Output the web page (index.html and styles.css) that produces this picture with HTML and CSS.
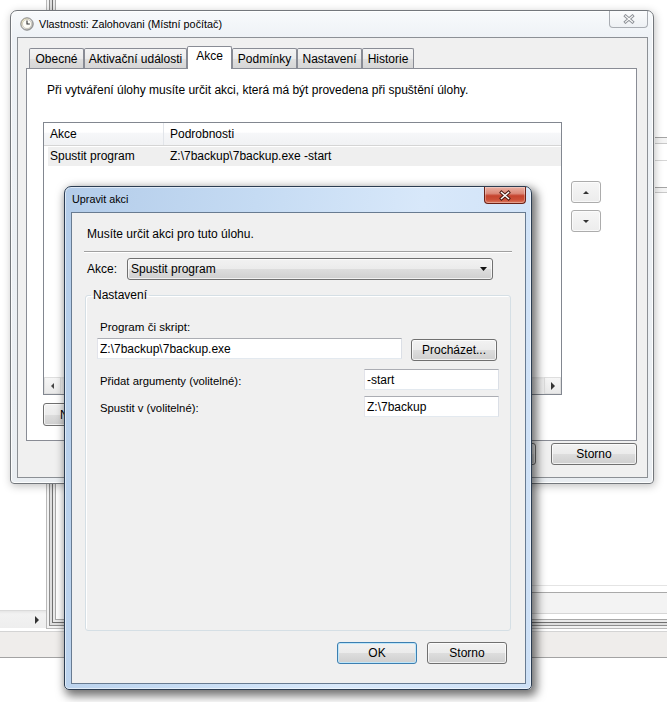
FILE: index.html
```html
<!DOCTYPE html>
<html lang="cs">
<head>
<meta charset="utf-8">
<title>Upravit akci</title>
<link rel="stylesheet" href="styles.css">
</head>
<body>
<div class="desktop">
  <div class="bg-frame"></div>
  <div class="bg-hscroll"><i class="tri-right"></i></div>
  <div class="bg-pane"></div>
  <div class="bg-status"></div>
  <div class="bg-right"></div>

  <section class="window props">
    <header class="titlebar props-title">
      <svg class="app-icon" width="14" height="14" viewBox="0 0 14 14">
        <defs>
          <linearGradient id="clk" x1="0" y1="0" x2="1" y2="1">
            <stop offset="0" stop-color="#f4e9b0"/>
            <stop offset="0.5" stop-color="#e4e4e4"/>
            <stop offset="1" stop-color="#9a9a9a"/>
          </linearGradient>
        </defs>
        <circle cx="7" cy="7" r="6.2" fill="url(#clk)" stroke="#777" stroke-width="0.9"/>
        <circle cx="7" cy="7" r="4.5" fill="#fdfdf8" stroke="#bdb9a6" stroke-width="0.6"/>
        <path d="M7 3.6 V7 H9.8" fill="none" stroke="#2e2e2e" stroke-width="1.1"/>
      </svg>
      <span class="title">Vlastnosti: Zalohovani (Místní počítač)</span>
      <span class="close close-inactive">
        <svg width="12" height="10" viewBox="0 0 12 10">
          <path d="M2.5 2 L9.5 8 M9.5 2 L2.5 8" stroke="#8d9197" stroke-width="3" stroke-linecap="square"/>
          <path d="M2.5 2 L9.5 8 M9.5 2 L2.5 8" stroke="#fbfbfb" stroke-width="1.2" stroke-linecap="square"/>
        </svg>
      </span>
    </header>
    <div class="client props-client">
      <nav class="tabs">
        <span class="tab tab-obecne">Obecné</span>
        <span class="tab tab-aktiv">Aktivační události</span>
        <span class="tab tab-akce active">Akce</span>
        <span class="tab tab-podm">Podmínky</span>
        <span class="tab tab-nast">Nastavení</span>
        <span class="tab tab-hist">Historie</span>
      </nav>
      <div class="panel">
        <p class="intro">Při vytváření úlohy musíte určit akci, která má být provedena při spuštění úlohy.</p>
        <div class="list-area">
          <div class="listview">
            <div class="lv-header">
              <span class="col1">Akce</span>
              <span class="col2">Podrobnosti</span>
            </div>
            <div class="lv-row">
              <span class="col1">Spustit program</span>
              <span class="col2">Z:\7backup\7backup.exe -start</span>
            </div>
            <div class="lv-fill"></div>
            <div class="hscroll">
              <span class="sb-btn"><i class="tri-left"></i></span>
              <span class="sb-track"></span>
              <span class="sb-btn"><i class="tri-right"></i></span>
            </div>
          </div>
          <div class="updown">
            <button class="btn small"><i class="tri-up"></i></button>
            <button class="btn small"><i class="tri-down"></i></button>
          </div>
        </div>
        <div class="list-buttons">
          <button class="btn wide">Nová...</button>
        </div>
      </div>
      <div class="footer">
        <button class="btn ok-outer">OK</button>
        <button class="btn storno-outer">Storno</button>
      </div>
    </div>
  </section>

  <section class="window dialog">
    <header class="titlebar dialog-title">
      <span class="title">Upravit akci</span>
      <span class="close close-active">
        <svg width="14" height="11" viewBox="0 0 14 11">
          <path d="M3.5 2.5 L10.5 8.5 M10.5 2.5 L3.5 8.5" stroke="#4b1a12" stroke-width="3.4" stroke-linecap="square"/>
          <path d="M3.5 2.5 L10.5 8.5 M10.5 2.5 L3.5 8.5" stroke="#ffffff" stroke-width="1.5" stroke-linecap="square"/>
        </svg>
      </span>
    </header>
    <div class="client dialog-client">
      <p class="desc">Musíte určit akci pro tuto úlohu.</p>
      <div class="sep"></div>
      <div class="akce-row">
        <span class="akce-label">Akce:</span>
        <div class="combo">
          <span>Spustit program</span>
          <svg class="combo-arrow" width="7" height="4" viewBox="0 0 7 4"><path d="M0 0 H7 L3.5 4 Z" fill="#111"/></svg>
        </div>
      </div>
      <fieldset class="group">
        <legend>Nastavení</legend>
        <div class="group-body">
          <div class="lbl">Program či skript:</div>
          <div class="row row-prog">
            <input class="field field-prog" type="text" value="Z:\7backup\7backup.exe" readonly>
            <button class="btn browse">Procházet...</button>
          </div>
          <div class="row row-opt">
            <span class="lbl-inline">Přidat argumenty (volitelné):</span>
            <input class="field field-short" type="text" value="-start" readonly>
          </div>
          <div class="row row-opt row-last">
            <span class="lbl-inline">Spustit v (volitelné):</span>
            <input class="field field-short" type="text" value="Z:\7backup" readonly>
          </div>
        </div>
      </fieldset>
      <div class="dialog-buttons">
        <button class="btn default dlg-btn">OK</button>
        <button class="btn dlg-btn">Storno</button>
      </div>
    </div>
  </section>
</div>
</body>
</html>
```

FILE: styles.css
```css
* { box-sizing: border-box; }

html, body {
  margin: 0;
  padding: 0;
  background: #fff;
}

body {
  font: 12px/14px "Liberation Sans", Arial, sans-serif;
  color: #000;
}

.desktop {
  position: relative;
  width: 667px;
  height: 702px;
  overflow: hidden;
  background: #fff;
}

/* ---------- background application (behind the windows) ---------- */
.bg-frame {
  position: absolute;
  left: 46px;
  top: -4px;
  width: 660px;
  height: 633px;
  border-left: 1px solid #b9b9b9;
  border-bottom: 1px solid #b9b9b9;
  box-shadow:
    inset 2px -2px 0 #f2f2f2,
    inset 3px -3px 0 #8d8d8d,
    inset 5px -5px 0 #dedede,
    inset 6px -6px 0 #6f6f6f,
    inset 8px -8px 0 #e9e9e9,
    inset 9px -9px 0 #a9a9a9;
}

.bg-hscroll {
  position: absolute;
  left: 0;
  top: 610px;
  width: 46px;
  height: 18px;
  background: linear-gradient(#e6e6e6, #f2f2f2 3px, #eeeeee);
  border-top: 1px solid #dadada;
  display: flex;
  align-items: center;
  justify-content: flex-end;
  padding-right: 7px;
}

.bg-pane {
  position: absolute;
  left: 70px;
  top: 585px;
  width: 600px;
  height: 29px;
  background: linear-gradient(to bottom,
    #e4e4e4 0, #e4e4e4 1px,
    #ffffff 1px, #ffffff 7px,
    #a9a9a9 7px, #a9a9a9 8px,
    #f3f3f3 8px, #f3f3f3 28px,
    #d6d6d6 28px, #d6d6d6 29px);
}

.bg-status {
  position: absolute;
  left: 0;
  top: 631px;
  width: 667px;
  height: 27px;
  background: #efedeb;
  border-top: 1px solid #d4d4d4;
  border-bottom: 1px solid #a3a3a3;
}

.bg-right {
  position: absolute;
  left: 655px;
  top: 120px;
  width: 12px;
  height: 110px;
  background: linear-gradient(to bottom,
    #fff 0, #fff 17px,
    #a4a4a4 17px, #a4a4a4 18px,
    #f4f4f4 18px, #f4f4f4 23px,
    #c9c9c9 23px, #c9c9c9 24px,
    #fff 24px, #fff 40px,
    #d6d6d6 40px, #d6d6d6 41px,
    #fff 41px, #fff 67px,
    #a4a4a4 67px, #a4a4a4 68px,
    #f4f4f4 68px, #f4f4f4 72px,
    #c9c9c9 72px, #c9c9c9 73px,
    #fff 73px);
}

/* ---------- generic window ---------- */
.window {
  position: absolute;
  display: flex;
  flex-direction: column;
}

.titlebar {
  display: flex;
  align-items: center;
  flex-shrink: 0;
}

.title {
  font-size: 10.8px;
  line-height: 15px;
  white-space: nowrap;
}

.close {
  margin-left: auto;
  align-self: flex-start;
  display: flex;
  align-items: center;
  justify-content: center;
  border-top: none;
  border-radius: 0 0 4px 4px;
}

.client {
  flex: 1;
  min-height: 0;
  display: flex;
  flex-direction: column;
  background: #f0f0f0;
}

/* ---------- properties window (inactive) ---------- */
.props {
  left: 10px;
  top: 10px;
  width: 644px;
  height: 474px;
  border: 1px solid #73777c;
  border-radius: 7px 7px 4px 4px;
  background: linear-gradient(to bottom, #f8fafc 0, #eef2f6 26px, #eaeef2 100%);
  padding: 0 5px 5px 6px;
  box-shadow: 1px 2px 8px rgba(0, 0, 0, 0.25), inset 0 0 0 1px rgba(255, 255, 255, 0.85);
}

.props-title {
  height: 26px;
  padding-left: 3px;
}

.app-icon {
  flex-shrink: 0;
  margin-right: 5px;
}

.close-inactive {
  width: 39px;
  height: 17px;
  border: 1px solid #a9adb3;
  border-top: none;
  background: linear-gradient(#fbfcfd, #eef1f4);
}

.props-client {
  border: 1px solid #8c9095;
  padding: 8px 10px 12px 8px;
}

.tabs {
  display: flex;
  align-items: flex-end;
  height: 22px;
  padding-left: 3px;
  flex-shrink: 0;
}

.tab {
  height: 20px;
  border: 1px solid #898c95;
  border-bottom: none;
  border-radius: 2px 2px 0 0;
  background: linear-gradient(#f4f4f4 0%, #ececec 50%, #e0e0e0 51%, #d6d6d6 100%);
  padding-top: 3px;
  text-align: center;
  white-space: nowrap;
}

.tab.active {
  position: relative;
  z-index: 2;
  height: 23px;
  margin-bottom: -1px;
  padding-top: 2px;
  background: #fff;
}

.tab-obecne { width: 55px; }
.tab-aktiv { width: 103px; }
.tab-akce { width: 45px; }
.tab-podm { width: 65px; }
.tab-nast { width: 65px; }
.tab-hist { width: 52px; }

.panel {
  flex: 1;
  min-height: 0;
  background: #fff;
  border: 1px solid #898c95;
  padding: 14px 0 0 16px;
  display: flex;
  flex-direction: column;
}

.intro {
  margin: 0 0 0 4px;
  line-height: 14px;
  white-space: nowrap;
}

.list-area {
  display: flex;
  gap: 9px;
  margin-top: 25px;
}

.listview {
  width: 519px;
  height: 273px;
  border: 1px solid #828790;
  background: #fff;
  display: flex;
  flex-direction: column;
}

.lv-header {
  display: flex;
  height: 23px;
  flex-shrink: 0;
  background: linear-gradient(#ffffff 0%, #ffffff 42%, #f6f7f9 46%, #f1f2f4 100%);
  border-bottom: 1px solid #d5d5d5;
}

.lv-header span {
  line-height: 22px;
  white-space: nowrap;
}

.lv-header .col1 {
  width: 120px;
  padding-left: 6px;
  border-right: 1px solid #e2e5ea;
}

.lv-header .col2 {
  padding-left: 6px;
}

.lv-row {
  display: flex;
  height: 19px;
  margin: 1px 0 0 4px;
  background: #efefef;
  flex-shrink: 0;
}

.lv-row span {
  line-height: 19px;
  white-space: nowrap;
}

.lv-row .col1 {
  width: 116px;
  padding-left: 2px;
}

.lv-row .col2 {
  padding-left: 6px;
}

.lv-fill {
  flex: 1;
}

.hscroll {
  display: flex;
  height: 17px;
  flex-shrink: 0;
  background: linear-gradient(#e4e4e4, #f1f1f1 3px, #efefef);
}

.sb-btn {
  width: 17px;
  display: flex;
  align-items: center;
  justify-content: center;
  border: 1px solid #dedede;
  background: linear-gradient(#f6f6f6, #e9e9e9);
}

.sb-track {
  flex: 1;
}

.updown {
  display: flex;
  flex-direction: column;
  gap: 7px;
  margin-top: 59px;
}

.list-buttons {
  display: flex;
  gap: 6px;
  margin-top: 8px;
}

.footer {
  display: flex;
  justify-content: flex-end;
  gap: 15px;
  margin-top: 2px;
  flex-shrink: 0;
}

/* ---------- buttons & controls ---------- */
.btn {
  font: inherit;
  color: #000;
  height: 22px;
  padding: 0;
  border: 1px solid #707070;
  border-radius: 3px;
  background: linear-gradient(#f2f2f2 0%, #ebebeb 50%, #dddddd 51%, #cfcfcf 100%);
  box-shadow: inset 0 0 0 1px rgba(255, 255, 255, 0.7);
  display: flex;
  align-items: center;
  justify-content: center;
  white-space: nowrap;
}

.btn.small {
  width: 30px;
  height: 22px;
  border-color: #acacac;
  background: linear-gradient(#f6f6f6, #ececec);
}

.btn.wide {
  width: 72px;
  height: 23px;
}

.ok-outer { width: 80px; }
.storno-outer { width: 86px; }

.btn.default {
  border-color: #3c7fb1;
  box-shadow: inset 0 0 0 1px #bfe6f9;
}

.tri-up, .tri-down, .tri-left, .tri-right {
  display: block;
  width: 0;
  height: 0;
}

.tri-up {
  border-left: 3px solid transparent;
  border-right: 3px solid transparent;
  border-bottom: 3px solid #333;
}

.tri-down {
  border-left: 3px solid transparent;
  border-right: 3px solid transparent;
  border-top: 3px solid #333;
}

.tri-left {
  border-top: 3px solid transparent;
  border-bottom: 3px solid transparent;
  border-right: 3px solid #444;
}

.tri-right {
  border-top: 4px solid transparent;
  border-bottom: 4px solid transparent;
  border-left: 4px solid #333;
}

/* ---------- edit action dialog (active) ---------- */
.dialog {
  left: 64px;
  top: 186px;
  width: 468px;
  height: 504px;
  border: 1px solid #2c3d52;
  border-radius: 7px 7px 5px 5px;
  background: linear-gradient(100deg, #b3cce9 0%, #c5dbf3 35%, #d8e8fa 65%, #cde0f6 100%);
  padding: 0 5px 5px 6px;
  box-shadow: 3px 4px 10px 2px rgba(0, 0, 0, 0.55), inset 0 0 0 1px rgba(255, 255, 255, 0.55);
}

.dialog-title {
  height: 25px;
  padding-left: 1px;
}

.close-active {
  width: 42px;
  height: 17px;
  border: 1px solid #6b2116;
  border-top: none;
  background: linear-gradient(#eab0a3 0%, #dc8a7a 40%, #c5432e 55%, #cc5038 80%, #dc7c62 100%);
  box-shadow: inset 0 0 0 1px rgba(255, 255, 255, 0.3);
}

.dialog-client {
  border: 1px solid #687b91;
  padding: 14px 13px 19px 12px;
}

.desc {
  margin: 0 0 0 3px;
  font-size: 12px;
  line-height: 15px;
  white-space: nowrap;
}

.sep {
  margin-top: 9px;
  height: 2px;
  border-top: 1px solid #a0a0a0;
  border-bottom: 1px solid #ffffff;
  flex-shrink: 0;
}

.akce-row {
  display: flex;
  align-items: center;
  margin-top: 5px;
  height: 22px;
  flex-shrink: 0;
}

.akce-label {
  width: 40px;
  margin-left: 3px;
  font-size: 12px;
}

.combo {
  width: 366px;
  height: 22px;
  display: flex;
  align-items: center;
  padding: 0 5px 0 3px;
  border: 1px solid #707070;
  border-radius: 3px;
  background: linear-gradient(#f2f2f2 0%, #ebebeb 50%, #dddddd 51%, #cfcfcf 100%);
  box-shadow: inset 0 0 0 1px rgba(255, 255, 255, 0.7);
  font-size: 12px;
}

.combo-arrow {
  margin-left: auto;
}

.group {
  flex: 1;
  min-height: 0;
  min-width: 0;
  margin: 8px 1px 0 1px;
  padding: 0;
  border: 1px solid #d5dfe5;
  border-radius: 3px;
  box-shadow: inset 1px 1px 0 #fff;
}

.group legend {
  margin-left: 5px;
  padding: 0 2px;
  font-size: 12px;
  line-height: 15px;
}

.group-body {
  padding: 17px 11px 0 11px;
}

.lbl {
  margin-left: 3px;
  font-size: 11.6px;
  line-height: 13px;
  margin-bottom: 5px;
}

.row {
  display: flex;
  align-items: flex-start;
}

.row-prog {
  gap: 9px;
}

.row-opt {
  margin-top: 8px;
}

.row-last {
  margin-top: 6px;
}

.lbl-inline {
  margin-left: 3px;
  padding-top: 6px;
  font-size: 11.3px;
  line-height: 13px;
  white-space: nowrap;
}

.field {
  font: inherit;
  color: #000;
  height: 21px;
  margin: 0;
  padding: 0 2px;
  line-height: 19px;
  border: 1px solid;
  border-color: #abadb3 #dbdfe6 #e3e9ef #e2e3ea;
  background: #fff;
  outline: none;
}

.field-prog {
  width: 305px;
}

.field-short {
  width: 135px;
  margin-left: auto;
}

.browse {
  width: 86px;
  margin-top: 1px;
}

.dialog-buttons {
  display: flex;
  justify-content: flex-end;
  gap: 10px;
  margin: 11px 5px 0 0;
  flex-shrink: 0;
}

.dlg-btn {
  width: 80px;
  font-size: 12px;
}
```
